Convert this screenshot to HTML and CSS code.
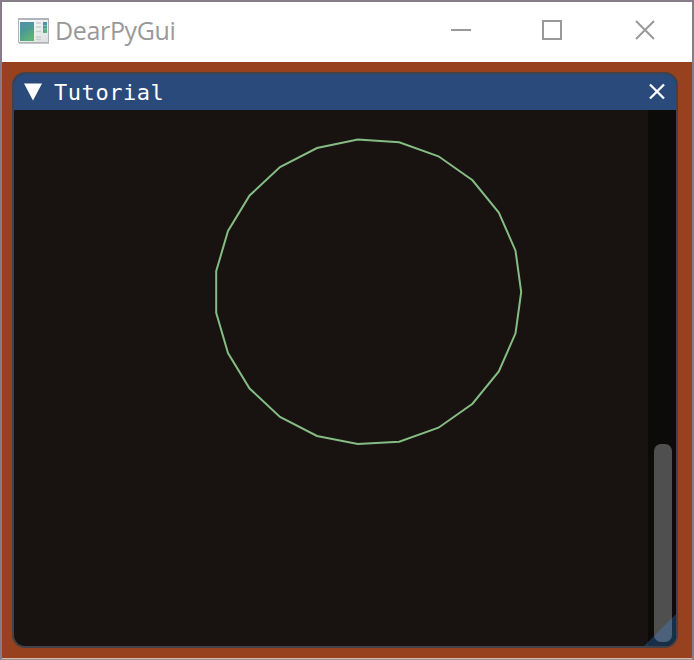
FILE: index.html
```html
<!DOCTYPE html>
<html lang="en">
<head>
<meta charset="utf-8">
<title>DearPyGui</title>
<link rel="stylesheet" href="styles.css">
</head>
<body>
<div class="viewport">
  <header class="titlebar">
    <svg class="app-icon" width="32" height="27" viewBox="0 0 32 27">
      <defs>
        <linearGradient id="screen" x1="0" y1="0" x2=".5" y2="1"><stop offset="0" stop-color="#4f86a8"/><stop offset=".5" stop-color="#4b9a93"/><stop offset="1" stop-color="#5fb377"/></linearGradient>
        <linearGradient id="case" x1="0" y1="0" x2="1" y2="1"><stop offset="0" stop-color="#fff"/><stop offset="1" stop-color="#dcdee0"/></linearGradient>
      </defs>
      <rect x=".5" y=".5" width="30" height="24" fill="url(#case)" stroke="#b0b4b9"/>
      <path d="M0 1h31" stroke="#b0b4bc" stroke-width="2"/>
      <path d="M1 25.5h30" stroke="#c5c7ca"/>
      <rect x="2" y="4" width="14" height="19" fill="url(#screen)"/>
      <path d="M2 14Q7 9 16 8V4H2z" fill="#5b9cab" opacity=".35"/>
      <path d="M18 5h5M18 9h5M18 13.5h5M18 19h5M18 21.500h5" stroke="#cbcdcf" stroke-width="1.5"/>
      <rect x="25" y="4" width="4" height="11" fill="url(#screen)"/>
      <path d="M25 7.500h4M25 11h4" stroke="#9fc8cc" stroke-width=".7"/>
    </svg>
    <span class="app-name">DearPyGui</span>
    <svg class="controls" width="206" height="20" viewBox="0 0 206 20">
      <path d="M0 10h20" />
      <rect x="92" y="1" width="18" height="18"/>
      <path d="M185 1l18 18M203 1l-18 18"/>
    </svg>
  </header>
  <main class="client">
    <section class="window">
      <div class="window-title">
        <svg class="arrow" width="18" height="18" viewBox="0 0 18 18"><path d="M0 .5h18L9 17.500z"/></svg>
        <span class="window-name">Tutorial</span>
        <svg class="close" width="18" height="18" viewBox="0 0 18 18"><path d="M2 1.500l14 14M16 1.500L2 15.500"/></svg>
      </div>
      <div class="content">
        <svg class="drawing" width="634" height="536" viewBox="14 110 634 536">
          <polygon points="521.2,292 515.5,333.300 498.800,371.500 472.500,403.700 438.500,427.700 399.200,441.700 357.800,444 317,436 280,416.900 249.600,388.500 228,353 216.200,312.800 216.200,271.200 228,231 249.600,195.500 280,167.100 317,148 357.800,139.500 399.200,142.300 438.500,156.300 472.500,180.300 498.800,212.500 515.500,250.700"/>
        </svg>
        <div class="scrollbar"><div class="thumb"></div></div>
      </div>
      <div class="grip"></div>
    </section>
  </main>
</div>
</body>
</html>
```
FILE: styles.css
```css
* { box-sizing: border-box; }
body { margin: 0; }
.viewport {
  width: 694px;
  height: 660px;
  display: flex;
  flex-direction: column;
  border: 2px solid #877d89;
  border-bottom: 1px solid #9a8f90;
}
.titlebar {
  height: 60px;
  flex: none;
  display: flex;
  align-items: center;
  padding: 0 35px 3px 16px;
  background: #fff;
}
.app-icon { margin-top: 2px; }
.app-name {
  margin: -1px 0 0 5px;
  font: 400 25px/34px "Open Sans", sans-serif;
  letter-spacing: -.35px;
  color: #999;
}
.controls {
  margin: -2px 0 0 auto;
  fill: none;
  stroke: #999;
  stroke-width: 2;
}
.client {
  flex: 1;
  padding: 10px 14px 10px 10px;
  background: #98411f;
  border-bottom: 1px solid #dcb9a9;
}
.window {
  position: relative;
  width: 666px;
  height: 576px;
  overflow: hidden;
  display: flex;
  flex-direction: column;
  border: 2px solid #434149;
  border-radius: 13px;
  background: #181310;
}
.window-title {
  margin: -2px -2px 0;
  height: 38px;
  flex: none;
  display: flex;
  align-items: center;
  padding: 0 10px;
  background: #294a7a;
  border: 2px solid #465b7c;
  border-bottom: 0;
  border-radius: 13px 13px 0 0;
}
.arrow { fill: #fff; }
.window-name {
  margin: 1px 0 0 12px;
  font: 22px/30px "DejaVu Sans Mono", monospace;
  letter-spacing: .55px;
  color: #fff;
}
.close {
  margin-left: auto;
  fill: none;
  stroke: #fff;
  stroke-width: 2.3;
}
.content { flex: 1; display: flex; }
.drawing { display: block; }
.drawing polygon { fill: none; stroke: #84bc84; stroke-width: 2; }
.scrollbar {
  width: 28px;
  padding: 334px 4px 4px 6px;
  background: #0c0b09;
}
.thumb { height: 198px; border-radius: 7px; background: #4f4f4f; }
.grip {
  position: absolute;
  right: 0;
  bottom: 0;
  width: 32px;
  height: 32px;
  background: rgba(66, 150, 250, .26);
  clip-path: polygon(100% 0, 100% 100%, 0 100%);
}
```
